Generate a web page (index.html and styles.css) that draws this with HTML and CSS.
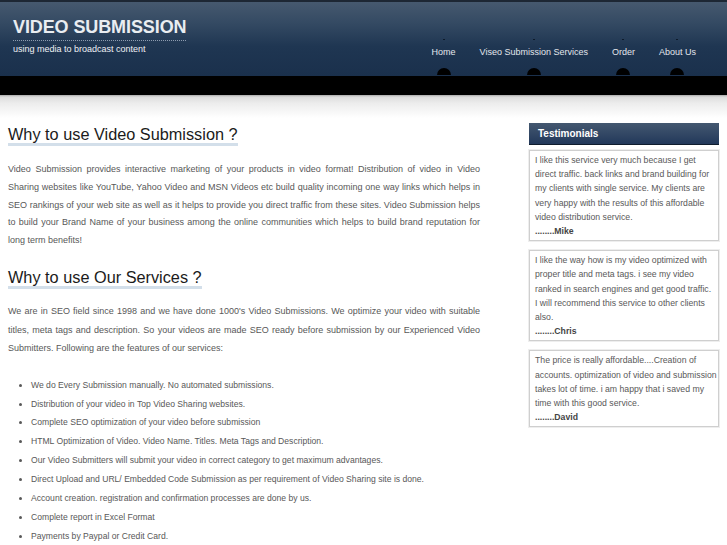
FILE: index.html
```html
<!DOCTYPE html>
<html lang="en">
<head>
<meta charset="utf-8">
<title>Video Submission</title>
<link rel="stylesheet" href="styles.css">
</head>
<body>
<header class="top">
  <div class="brand">
    <h1 class="logo">VIDEO SUBMISSION</h1>
    <p class="tagline">using media to broadcast content</p>
  </div>
  <nav class="menu">
    <a class="menu-item" href="#"><span class="dot"></span><span class="label">Home</span><span class="knob"></span></a>
    <a class="menu-item" href="#"><span class="dot"></span><span class="label">Viseo Submission Services</span><span class="knob"></span></a>
    <a class="menu-item" href="#"><span class="dot"></span><span class="label">Order</span><span class="knob"></span></a>
    <a class="menu-item" href="#"><span class="dot"></span><span class="label">About Us</span><span class="knob"></span></a>
  </nav>
</header>
<div class="band"></div>
<div class="shade"></div>
<div class="page">
  <main class="content">
    <h2 class="title first">Why to use Video Submission ?</h2>
    <p class="text t1">Video Submission provides interactive marketing of your products in video format! Distribution of video in Video Sharing websites like YouTube, Yahoo Video and MSN Videos etc build quality incoming one way links which helps in SEO rankings of your web site as well as it helps to provide you direct traffic from these sites. Video Submission helps to build your Brand Name of your business among the online communities which helps to build brand reputation for long term benefits!</p>
    <h2 class="title second">Why to use Our Services ?</h2>
    <p class="text t2">We are in SEO field since 1998 and we have done 1000's Video Submissions. We optimize your video with suitable titles, meta tags and description. So your videos are made SEO ready before submission by our Experienced Video Submitters. Following are the features of our services:</p>
    <ul class="features">
      <li>We do Every Submission manually. No automated submissions.</li>
      <li>Distribution of your video in Top Video Sharing websites.</li>
      <li>Complete SEO optimization of your video before submission</li>
      <li>HTML Optimization of Video. Video Name. Titles. Meta Tags and Description.</li>
      <li>Our Video Submitters will submit your video in correct category to get maximum advantages.</li>
      <li>Direct Upload and URL/ Embedded Code Submission as per requirement of Video Sharing site is done.</li>
      <li>Account creation. registration and confirmation processes are done by us.</li>
      <li>Complete report in Excel Format</li>
      <li>Payments by Paypal or Credit Card.</li>
    </ul>
  </main>
  <aside class="sidebar">
    <div class="side-head">Testimonials</div>
    <div class="quote">
      <p>I like this service very much because I get<br>direct traffic. back links and brand building for<br>my clients with single service. My clients are<br>very happy with the results of this affordable<br>video distribution service.</p>
      <p class="who">........Mike</p>
    </div>
    <div class="quote">
      <p>I like the way how is my video optimized with<br>proper title and meta tags. i see my video<br>ranked in search engines and get good traffic.<br>I will recommend this service to other clients<br>also.</p>
      <p class="who">........Chris</p>
    </div>
    <div class="quote">
      <p>The price is really affordable....Creation of<br>accounts. optimization of video and submission<br>takes lot of time. i am happy that i saved my<br>time with this good service.</p>
      <p class="who">........David</p>
    </div>
  </aside>
</div>
</body>
</html>
```
FILE: styles.css
```css
* { box-sizing: border-box; }
html, body { margin: 0; padding: 0; }
body {
  background: #fff;
  font-family: "Liberation Sans", Arial, sans-serif;
  color: #555;
}

.top {
  height: 76px;
  border-top: 2px solid #1d2734;
  background: linear-gradient(#46596f 0%, #334962 30%, #1f3652 60%, #1a304c 100%);
  display: flex;
  justify-content: space-between;
  padding: 0 31px 0 13px;
}
.brand { padding-top: 16px; }
.logo {
  display: inline-block;
  margin: 0;
  font-size: 18px;
  line-height: 18px;
  font-weight: bold;
  color: #e9edf1;
  letter-spacing: -0.1px;
  padding-bottom: 4px;
  border-bottom: 1px dotted #8e9cb0;
}
.tagline {
  margin: 3px 0 0;
  font-size: 9px;
  line-height: 11px;
  color: #eef1f4;
}

.menu {
  display: flex;
  gap: 24px;
  align-self: flex-end;
  padding-bottom: 1px;
}
.menu-item {
  display: flex;
  flex-direction: column;
  align-items: center;
  text-decoration: none;
  color: #e3e7ec;
}
.dot {
  width: 2px;
  height: 1px;
  background: #0d1a2a;
}
.label {
  margin-top: 7px;
  font-size: 9px;
  line-height: 11px;
  white-space: nowrap;
}
.knob {
  margin-top: 10px;
  width: 14px;
  height: 7px;
  border-radius: 7px 7px 0 0;
  background: #000;
}

.band { height: 19px; background: #000; }
.shade {
  height: 23px;
  background: linear-gradient(#a9a9a9 0px, #dcdcdc 2px, #ececec 8px, #fff 100%);
}

.page {
  display: flex;
  padding: 0 8px;
}
.content { flex: 0 0 472px; }
.sidebar { flex: 0 0 190px; width: 190px; min-width: 0; margin-left: auto; margin-top: 5px; }

.title {
  display: inline-block;
  margin: 0;
  font-size: 16.3px;
  line-height: 18px;
  font-weight: normal;
  color: #1b1b1b;
  border-bottom: 3px solid #d3dfea;
}
.title.first { margin-top: 7px; }
.title.second { margin-top: 18px; }

.text {
  margin: 15px 0 0;
  font-size: 9px;
  text-align: justify;
  color: #585858;
}
.t1 { line-height: 17.8px; }
.t2 { line-height: 18.7px; margin-top: 13px; }

.features {
  margin: 17.5px 0 0;
  padding-left: 23px;
  font-size: 8.6px;
  line-height: 18.9px;
  color: #585858;
}

.side-head {
  height: 22px;
  padding: 0 9px;
  background: linear-gradient(#445870, #22385a);
  border-bottom: 1px solid #0f1c2d;
  color: #fff;
  font-weight: bold;
  font-size: 10px;
  line-height: 21px;
}
.quote {
  margin-top: 5px;
  border: 1px solid #cfcfcf;
  box-shadow: 0 0 0 1px #eeeeee;
  padding: 2px 4px 2px 5px;
  font-size: 8.7px;
  line-height: 14.2px;
  color: #595959;
  white-space: nowrap;
  overflow: hidden;
}
.quote + .quote { margin-top: 9px; }
.quote p { margin: 0; }
.quote .who { font-weight: bold; color: #444; }
```
